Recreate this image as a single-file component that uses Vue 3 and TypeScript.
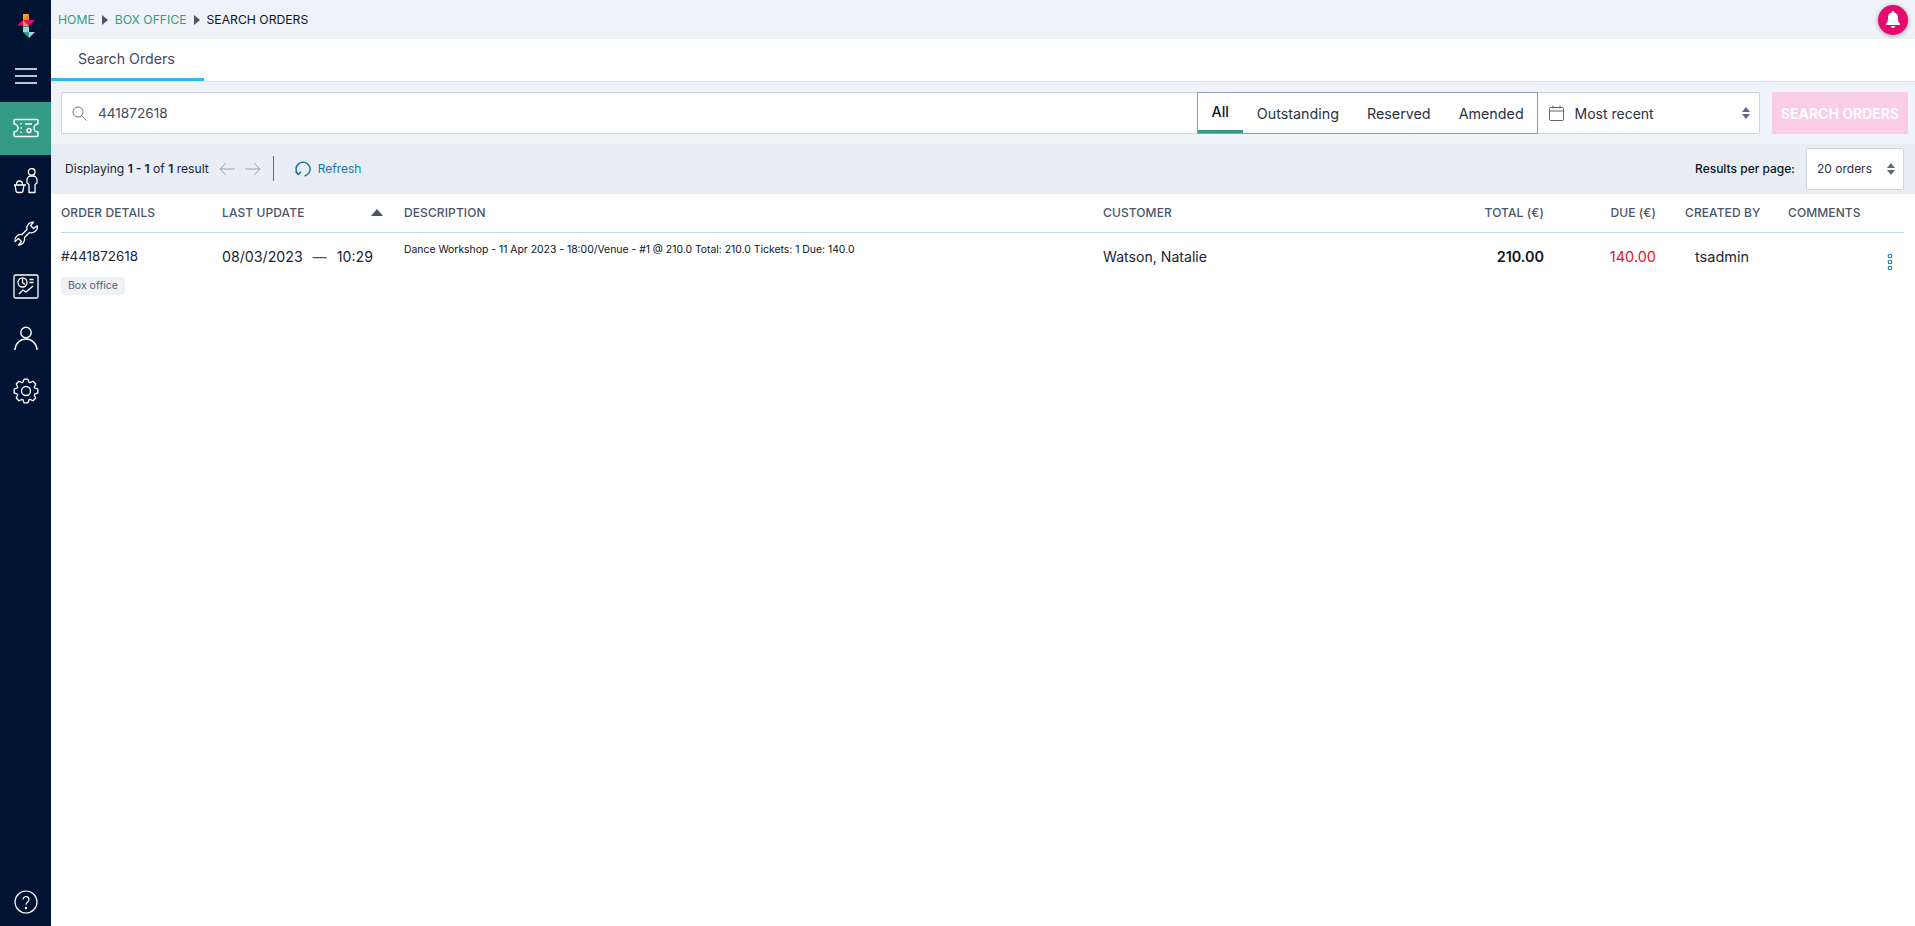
<template>
  <div class="app">
    <!-- sidebar -->
    <aside class="sidebar">
      <div class="logo">
        <svg width="18" height="24" viewBox="0 0 18 24">
          <path d="M6 0h6v6H6z" fill="#f6a21d" />
          <path d="M12 0v6H6z" fill="#e8890c" />
          <path d="M0 11.500L6 6v5.500z" fill="#e6096f" />
          <path d="M12 6h6l-6 6z" fill="#e6096f" />
          <path d="M6 6h6v6z" fill="#e6096f" />
          <path d="M6 6l6 6H6z" fill="#f6a21d" />
          <path d="M6 12.500h6v5.500H6z" fill="#a6d0e6" />
          <path d="M6 18h6v6z" fill="#2fa58d" />
          <path d="M12 18h6l-6 6z" fill="#a6d0e6" />
        </svg>
      </div>
      <div class="menu-btn">
        <svg width="22" height="16" viewBox="0 0 22 16" fill="none" stroke="#fff" stroke-width="1.4">
          <path d="M0 1h22M0 8h22M0 15h22" />
        </svg>
      </div>
      <div class="nav-item active">
        <svg width="26" height="20" viewBox="0 0 26 20" fill="none" stroke="#fff" stroke-width="1.4" stroke-linejoin="round">
          <path d="M2 1.500h22a1 1 0 0 1 1 1v3.500a4 4 0 0 0 0 8v3.500a1 1 0 0 1-1 1H2a1 1 0 0 1-1-1V14a4 4 0 0 0 0-8V2.500a1 1 0 0 1 1-1z" />
          <path d="M8 5v1.500M8 9.200v1.500M8 13.500v1.500M12 6h7" />
          <circle cx="16" cy="12.500" r="2" />
        </svg>
      </div>
      <div class="nav-item">
        <svg width="26" height="26" viewBox="0 0 26 26" fill="none" stroke="#fff" stroke-width="1.3" stroke-linejoin="round">
          <circle cx="18.700" cy="3.800" r="3.300" />
          <path d="M16 24.500V16.500L14 15V12a4 4 0 0 1 4-4h2a4 4 0 0 1 4 4v3l-2 1.500v8z" />
          <path d="M1 17h12M2 17l1 5.500a2 2 0 0 0 2 2h3a2 2 0 0 0 2-2l1-5.500M3.500 16.500a3 3.500 0 0 1 6 0" />
        </svg>
      </div>
      <div class="nav-item">
        <svg width="26" height="25" viewBox="0 0 26 25" fill="none" stroke="#fff" stroke-width="1.3" stroke-linejoin="round">
          <path d="M20.500 1.200L17.500 4.500l3 3 3.800-2.700A6 6 0 0 1 16.500 11.500L11.500 16.500A6 6 0 0 1 5.500 24l3-3.500-3-3-3.500 3A6 6 0 0 1 9 13.500L14 8.500A6 6 0 0 1 20.500 1.200z" />
        </svg>
      </div>
      <div class="nav-item">
        <svg width="26" height="25" viewBox="0 0 26 25" fill="none" stroke="#fff" stroke-width="1.3" stroke-linejoin="round">
          <rect x="1" y="1" width="24" height="23" rx="1.500" />
          <circle cx="9.500" cy="8.500" r="4.500" />
          <path d="M9.500 5v3.500l2.500 2M16.500 5.500h4M16.500 8.500h4M6 20l4-4 3 2 7-6" />
        </svg>
      </div>
      <div class="nav-item">
        <svg width="24" height="25" viewBox="0 0 24 25" fill="none" stroke="#fff" stroke-width="1.4">
          <circle cx="12" cy="6.500" r="5.200" />
          <path d="M1 24c0-6 5-11 11-11s11 5 11 11" />
        </svg>
      </div>
      <div class="nav-item">
        <svg width="26" height="26" viewBox="0 0 26 26" fill="none" stroke="#fff" stroke-width="1.3" stroke-linejoin="round">
          <path :d="gearPath" />
          <circle cx="13" cy="13" r="4.500" />
        </svg>
      </div>
      <div class="help">
        <svg width="24" height="24" viewBox="0 0 24 24" fill="none" stroke="#fff" stroke-width="1.2">
          <circle cx="12" cy="12" r="11" />
          <path d="M9 9.500a3 3 0 1 1 4.700 2.500c-1.100.8-1.700 1.300-1.700 2.800" />
          <circle cx="12" cy="18" r=".6" fill="#fff" />
        </svg>
      </div>
    </aside>

    <main class="content">
      <!-- breadcrumb -->
      <div class="topbar">
        <nav class="crumbs">
          <span class="crumb-link">HOME</span>
          <i class="crumb-arrow"></i>
          <span class="crumb-link">BOX OFFICE</span>
          <i class="crumb-arrow"></i>
          <span class="crumb-current">SEARCH ORDERS</span>
        </nav>
        <div class="bell">
          <svg width="14" height="17" viewBox="0 0 14 17" fill="#fff">
            <path d="M7 0a1.300 1.300 0 0 1 1.300 1.400C10.700 2 12 4 12 6.500c0 3.500.6 5 2 6.500v1H0v-1c1.400-1.500 2-3 2-6.500C2 4 3.300 2 5.700 1.400A1.300 1.300 0 0 1 7 0zM5 15h4a2 2 0 0 1-4 0z" />
          </svg>
        </div>
      </div>

      <!-- tabs -->
      <div class="tabs">
        <div class="tab">Search Orders</div>
      </div>

      <!-- search -->
      <div class="filters">
        <div class="search-box">
          <svg width="15" height="15" viewBox="0 0 15 15" fill="none" stroke="#6b7686" stroke-width="1">
            <circle cx="6" cy="6" r="5" />
            <path d="M9.800 9.800L14.500 14.500" />
          </svg>
          <span class="search-value">441872618</span>
        </div>
        <div class="segments">
          <div
            v-for="s in segments"
            :key="s"
            class="segment"
            :class="{ selected: s === 'All' }"
          >{{ s }}</div>
        </div>
        <div class="sort-select">
          <svg width="15" height="16" viewBox="0 0 15 16" fill="none" stroke="#5c6675" stroke-width="1">
            <rect x=".5" y="2.500" width="14" height="13" rx="1" />
            <path d="M.5 6h14M4 .5v3M11 .5v3" />
          </svg>
          <span class="sort-label">Most recent</span>
          <span class="updown"><i class="up"></i><i class="down"></i></span>
        </div>
        <div class="search-btn">SEARCH ORDERS</div>
      </div>

      <!-- toolbar -->
      <div class="toolbar">
        <span class="displaying">Displaying <b>1 - 1</b> of <b>1</b> result</span>
        <svg class="pager" width="17" height="12" viewBox="0 0 17 12" fill="none" stroke="#98a3b3" stroke-width="1">
          <path d="M16 6H1M6.500.5L1 6l5.500 5.500" />
        </svg>
        <svg class="pager" width="17" height="12" viewBox="0 0 17 12" fill="none" stroke="#98a3b3" stroke-width="1">
          <path d="M1 6h15M10.500.5L16 6l-5.500 5.500" />
        </svg>
        <span class="divider"></span>
        <svg width="16" height="16" viewBox="0 0 16 16" fill="none" stroke="#1c75a8" stroke-width="1.500">
          <path d="M3.500 13.500A7 7 0 1 1 9.500 15" />
          <path d="M.5 10.500l3 3 2.500-2.800" />
        </svg>
        <span class="refresh">Refresh</span>
        <span class="per-page-label">Results per page:</span>
        <div class="per-page">
          <span>20 orders</span>
          <span class="updown"><i class="up"></i><i class="down"></i></span>
        </div>
      </div>

      <!-- table -->
      <div class="table">
        <div class="row head">
          <div class="c-order">ORDER DETAILS</div>
          <div class="c-update">LAST UPDATE<i class="sort-arrow"></i></div>
          <div class="c-desc">DESCRIPTION</div>
          <div class="c-customer">CUSTOMER</div>
          <div class="c-total">TOTAL (€)</div>
          <div class="c-due">DUE (€)</div>
          <div class="c-created">CREATED BY</div>
          <div class="c-comments">COMMENTS</div>
        </div>
        <div class="row body">
          <div class="c-order">
            <div>#441872618</div>
            <span class="badge">Box office</span>
          </div>
          <div class="c-update date"><span>08/03/2023</span><span class="dash">—</span><span>10:29</span></div>
          <div class="c-desc desc">Dance Workshop - 11 Apr 2023 - 18:00/Venue - #1 @ 210.0 Total: 210.0 Tickets: 1 Due: 140.0</div>
          <div class="c-customer wide">Watson, Natalie</div>
          <div class="c-total strong">210.00</div>
          <div class="c-due red">140.00</div>
          <div class="c-created user">tsadmin</div>
          <div class="c-comments kebab-cell">
            <svg width="6" height="18" viewBox="0 0 6 18" fill="none" stroke="#1c75a8" stroke-width="1.100">
              <circle cx="3" cy="3" r="1.800" />
              <circle cx="3" cy="9" r="1.800" />
              <circle cx="3" cy="15" r="1.800" />
            </svg>
          </div>
        </div>
      </div>
    </main>
  </div>
</template>

<script setup lang="ts">
const segments: string[] = ['All', 'Outstanding', 'Reserved', 'Amended']

// 8 tooth outline for the settings icon
function buildGear(teeth: number, outer: number, inner: number): string {
  const pts: string[] = []
  const step = (Math.PI * 2) / teeth
  for (let i = 0; i < teeth; i++) {
    const a = i * step
    const offsets: [number, number][] = [
      [-0.34, inner],
      [-0.16, outer],
      [0.16, outer],
      [0.34, inner]
    ]
    for (const [o, r] of offsets) {
      const x = 13 + Math.cos(a + o) * r
      const y = 13 + Math.sin(a + o) * r
      pts.push(`${x.toFixed(2)} ${y.toFixed(2)}`)
    }
  }
  return `M${pts.join('L')}z`
}

const gearPath = buildGear(8, 12, 9.2)
</script>

<style>
html,
body {
  margin: 0;
  background: #fff;
}
</style>

<style scoped>
.app {
  display: flex;
  height: 926px;
  overflow: hidden;
  font-family: Inter, 'Liberation Sans', sans-serif;
  color: #1b2433;
}

.sidebar {
  width: 51px;
  flex-shrink: 0;
  background: #011333;
  display: flex;
  flex-direction: column;
  align-items: stretch;
}

.logo {
  height: 51px;
  display: flex;
  align-items: center;
  justify-content: center;
}

.menu-btn {
  height: 51px;
  box-sizing: border-box;
  padding-bottom: 2px;
  display: flex;
  align-items: center;
  justify-content: center;
}

.nav-item {
  height: 52.600px;
  display: flex;
  align-items: center;
  justify-content: center;
}

.nav-item.active {
  background: #339b85;
}

.help {
  margin-top: auto;
  height: 36px;
  display: flex;
  align-items: flex-start;
  justify-content: center;
}

.content {
  flex: 1;
  min-width: 0;
  display: flex;
  flex-direction: column;
}

.topbar {
  height: 39px;
  background: #eff3f8;
  display: flex;
  align-items: center;
  justify-content: space-between;
  padding: 0 7px;
}

.crumbs {
  display: flex;
  align-items: center;
  font-size: 12.200px;
}

.crumb-link {
  color: #339b85;
}

.crumb-current {
  color: #0b1422;
}

.crumb-arrow {
  width: 0;
  height: 0;
  margin: 0 7px;
  border-left: 6px solid #4a5568;
  border-top: 5px solid transparent;
  border-bottom: 5px solid transparent;
}

.bell {
  width: 30px;
  height: 30px;
  border-radius: 50%;
  background: #e6096f;
  box-shadow: 0 1px 4px rgba(0, 0, 0, 0.35);
  display: flex;
  align-items: center;
  justify-content: center;
}

.tabs {
  height: 42px;
  background: #fff;
  border-bottom: 1px solid #dde3ec;
  display: flex;
}

.tab {
  width: 153px;
  box-sizing: border-box;
  padding-left: 27px;
  line-height: 39px;
  height: 42px;
  font-size: 14.200px;
  color: #3f4a5c;
  border-bottom: 3px solid #38b6f1;
}

.filters {
  height: 62px;
  box-sizing: border-box;
  background: #f0f3f8;
  padding: 10px 7px 10px 10px;
  display: flex;
}

.search-box {
  flex: 1;
  background: #fff;
  border: 1px solid #cfd5df;
  border-right: none;
  border-radius: 2px 0 0 2px;
  display: flex;
  align-items: center;
  padding-left: 10px;
  gap: 11px;
}

.search-value {
  font-size: 13.600px;
  color: #3f4a5c;
}

.segments {
  display: flex;
  background: #fff;
  border: 1px solid #8e9db5;
  box-sizing: border-box;
  width: 341px;
}

.segment {
  font-size: 14.300px;
  color: #2a3342;
  padding: 0 14px;
  display: flex;
  align-items: center;
  box-sizing: border-box;
  height: 100%;
}

.segment.selected {
  color: #0b1422;
  font-weight: 500;
  border-bottom: 3px solid #339b85;
}

.sort-select {
  width: 222.500px;
  box-sizing: border-box;
  background: #fff;
  border: 1px solid #cfd5df;
  border-left: none;
  border-radius: 0 2px 2px 0;
  display: flex;
  align-items: center;
  padding: 0 9px 0 11px;
}

.sort-label {
  margin-left: 11px;
  font-size: 14px;
  color: #2a3342;
}

.updown {
  margin-left: auto;
  display: flex;
  flex-direction: column;
  gap: 2px;
}

.updown i {
  display: block;
  width: 0;
  height: 0;
  border-left: 4.500px solid transparent;
  border-right: 4.500px solid transparent;
}

.updown .up {
  border-bottom: 5px solid #5c6a80;
}

.updown .down {
  border-top: 5px solid #5c6a80;
}

.search-btn {
  margin-left: 12px;
  width: 136px;
  background: #f9cde6;
  border-radius: 2px;
  color: #fff;
  font-size: 14px;
  font-weight: 700;
  display: flex;
  align-items: center;
  justify-content: center;
  white-space: nowrap;
}

.toolbar {
  height: 50px;
  box-sizing: border-box;
  background: #e9eef6;
  padding: 0 11px 1px 14px;
  display: flex;
  align-items: center;
}

.displaying {
  font-size: 12.100px;
  color: #1b2433;
  margin-right: 10px;
}

.displaying b {
  font-weight: 600;
}

.pager {
  margin-right: 8px;
}

.divider {
  width: 1px;
  height: 25px;
  background: #5c6a80;
  margin: 0 21px 0 4px;
}

.refresh {
  margin-left: 7px;
  font-size: 12px;
  color: #1c75a8;
}

.per-page-label {
  margin-left: auto;
  font-size: 12px;
  font-weight: 500;
  color: #0b1422;
  margin-right: 11px;
}

.per-page {
  width: 98px;
  height: 42px;
  box-sizing: border-box;
  background: #fff;
  border: 1px solid #cfd5df;
  border-radius: 2px;
  display: flex;
  align-items: center;
  padding: 0 8px 0 10px;
  font-size: 12px;
  color: #2a3342;
}

.table {
  padding-left: 10px;
  padding-right: 11px;
}

.row {
  display: grid;
  grid-template-columns: 161px 182px 699px 342px 99px 112px 132px 1fr;
}

.head {
  height: 39px;
  padding-bottom: 2px;
  align-items: center;
  font-size: 12px;
  letter-spacing: 0.1px;
  font-weight: 500;
  color: #4a5568;
  border-bottom: 1px solid #c8d5e2;
  box-sizing: border-box;
}

.c-total,
.c-due {
  text-align: right;
}

.c-update {
  position: relative;
}

.sort-arrow {
  position: absolute;
  right: 21px;
  top: 50%;
  margin-top: -3px;
  width: 0;
  height: 0;
  border-left: 6px solid transparent;
  border-right: 6px solid transparent;
  border-bottom: 7px solid #4a5568;
}

.head .c-created {
  padding-left: 29px;
}

.body {
  padding-top: 15px;
  font-size: 13.400px;
  color: #1b2433;
}

.badge {
  display: inline-block;
  margin-top: 13px;
  background: #eef1f6;
  border-radius: 3px;
  padding: 0 7px;
  height: 18px;
  line-height: 18px;
  font-size: 10.500px;
  color: #556072;
}

.date {
  display: flex;
  width: 151px;
  justify-content: space-between;
  font-size: 14.200px;
}

.dash {
  color: #4a5568;
}

.desc {
  font-size: 10.400px;
  line-height: 12px;
  margin-top: -4px;
  color: #0b1422;
}

.wide {
  font-size: 14.100px;
}

.strong {
  font-size: 14.400px;
  font-weight: 600;
  color: #0b1422;
}

.red {
  font-size: 14.500px;
  color: #e0142e;
}

.user {
  padding-left: 39px;
  font-size: 14.500px;
}

.kebab-cell {
  display: flex;
  justify-content: flex-end;
  padding: 5px 11px 0 0;
}
</style>
